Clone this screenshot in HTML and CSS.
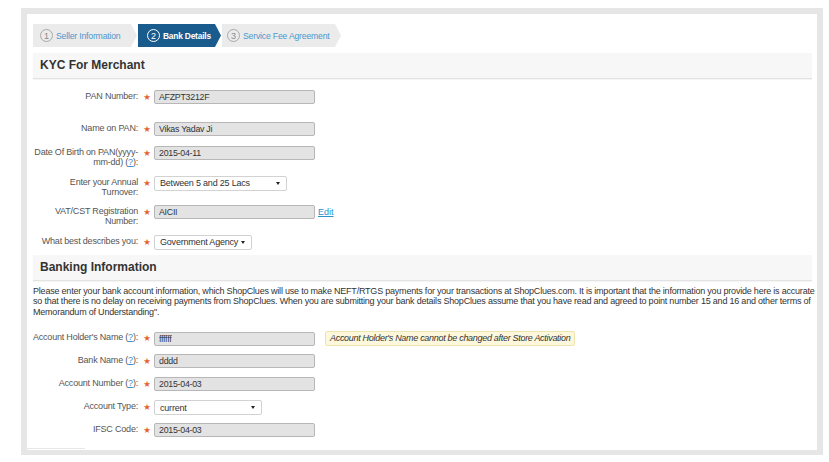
FILE: index.html
```html
<!DOCTYPE html>
<html lang="en">
<head>
<meta charset="utf-8">
<title>Bank Details</title>
<link rel="stylesheet" href="styles.css">
</head>
<body>
<div class="frame">
  <div class="panel">
    <div class="steps">
      <div class="step step-1"><span class="num">1</span><span class="step-text">Seller Information</span></div>
      <div class="step step-2 active"><span class="num">2</span><span class="step-text">Bank Details</span></div>
      <div class="step step-3"><span class="num">3</span><span class="step-text">Service Fee Agreement</span></div>
    </div>

    <h2 class="section-head">KYC For Merchant</h2>
    <div class="form kyc">
      <div class="row row-first">
        <label class="lbl"><span>PAN Number:</span></label><span class="req">★</span>
        <div class="field"><input class="txt" type="text" value="AFZPT3212F" readonly></div>
      </div>
      <div class="row">
        <label class="lbl"><span>Name on PAN:</span></label><span class="req">★</span>
        <div class="field"><input class="txt" type="text" value="Vikas Yadav Ji" readonly></div>
      </div>
      <div class="row">
        <label class="lbl"><span>Date Of Birth on PAN(yyyy-<br>mm-dd) (<a class="help" href="#">?</a>):</span></label><span class="req">★</span>
        <div class="field"><input class="txt" type="text" value="2015-04-11" readonly></div>
      </div>
      <div class="row">
        <label class="lbl"><span>Enter your Annual<br>Turnover:</span></label><span class="req">★</span>
        <div class="field"><div class="sel sel-turnover"><span>Between 5 and 25 Lacs</span><i class="caret"></i></div></div>
      </div>
      <div class="row">
        <label class="lbl"><span>VAT/CST Registration<br>Number:</span></label><span class="req">★</span>
        <div class="field"><input class="txt" type="text" value="AICII" readonly><a class="edit" href="#">Edit</a></div>
      </div>
      <div class="row">
        <label class="lbl"><span>What best describes you:</span></label><span class="req">★</span>
        <div class="field"><div class="sel sel-type"><span>Government Agency</span><i class="caret"></i></div></div>
      </div>
    </div>

    <h2 class="section-head head-bank">Banking Information</h2>
    <p class="intro">Please enter your bank account information, which ShopClues will use to make NEFT/RTGS payments for your transactions at ShopClues.com. It is important that the information you provide here is accurate<br>so that there is no delay on receiving payments from ShopClues. When you are submitting your bank details ShopClues assume that you have read and agreed to point number 15 and 16 and other terms of<br>Memorandum of Understanding".</p>

    <div class="form bank">
      <div class="row">
        <label class="lbl"><span>Account Holder's Name (<a class="help" href="#">?</a>):</span></label><span class="req">★</span>
        <div class="field"><input class="txt" type="text" value="ffffff" readonly><span class="note">Account Holder's Name cannot be changed after Store Activation</span></div>
      </div>
      <div class="row">
        <label class="lbl"><span>Bank Name (<a class="help" href="#">?</a>):</span></label><span class="req">★</span>
        <div class="field"><input class="txt" type="text" value="dddd" readonly></div>
      </div>
      <div class="row">
        <label class="lbl"><span>Account Number (<a class="help" href="#">?</a>):</span></label><span class="req">★</span>
        <div class="field"><input class="txt" type="text" value="2015-04-03" readonly></div>
      </div>
      <div class="row">
        <label class="lbl"><span>Account Type:</span></label><span class="req">★</span>
        <div class="field"><div class="sel sel-acct"><span>current</span><i class="caret"></i></div></div>
      </div>
      <div class="row">
        <label class="lbl"><span>IFSC Code:</span></label><span class="req">★</span>
        <div class="field"><input class="txt" type="text" value="2015-04-03" readonly></div>
      </div>
    </div>
    <div class="bottom-tab"></div>
  </div>
</div>
</body>
</html>
```

FILE: styles.css
```css
* { box-sizing: border-box; }

html, body {
  margin: 0;
  padding: 0;
  background: #ffffff;
}

body {
  font-family: "Liberation Sans", Arial, sans-serif;
  color: #333333;
}

.frame {
  margin: 8px 0 0 21px;
  width: 802px;
  height: 447px;
  background: #e6e6e6;
  padding: 6px 6px 5px 6px;
}

.panel {
  background: #ffffff;
  height: 100%;
  padding: 10px 5px 0 6px;
  position: relative;
  overflow: hidden;
}

/* ---------- steps ---------- */
.steps {
  display: flex;
  gap: 1px;
  height: 23px;
}

.step {
  display: flex;
  align-items: center;
  gap: 3px;
  padding-left: 7px;
  background: #ebebeb;
  color: #4d98cc;
  font-size: 8.7px;
  letter-spacing: -0.2px;
  white-space: nowrap;
  clip-path: polygon(0 0, calc(100% - 6px) 0, 100% 50%, calc(100% - 6px) 100%, 0 100%);
}

.step-1 { width: 104px; }
.step-2 { width: 83px; padding-left: 9px; }
.step-3 { width: 119px; padding-left: 5px; }

.step.active {
  background: #1a5b8d;
  color: #ffffff;
  font-weight: bold;
  font-size: 8.4px;
}

.num {
  width: 13px;
  height: 13px;
  border: 1px solid #a8a8a8;
  border-radius: 50%;
  display: flex;
  align-items: center;
  justify-content: center;
  font-size: 9px;
  letter-spacing: 0;
  font-weight: normal;
  color: #8a8a8a;
  flex: none;
}

.step.active .num {
  border-color: #ffffff;
  color: #ffffff;
}

/* ---------- section headers ---------- */
.section-head {
  margin: 6px 0 0 0;
  height: 26px;
  line-height: 25px;
  padding-left: 7px;
  background: #f7f7f7;
  border-bottom: 1px solid #e3e3e3;
  box-shadow: 0 1px 1px rgba(0, 0, 0, 0.04);
  font-size: 12px;
  font-weight: bold;
  color: #333333;
}

.section-head.head-bank { margin-top: 4px; }

/* ---------- form rows ---------- */
.form.kyc { margin-top: 11px; }

.row {
  display: grid;
  grid-template-columns: 105px 16px 1fr;
  align-items: start;
  min-height: 16px;
  margin-bottom: 8px;
}

.form.kyc .row-first { margin-bottom: 16px; }
.form.kyc .row:last-child { margin-bottom: 0; }

.form.bank { margin-top: 14px; }
.form.bank .row { margin-bottom: 7px; }

.lbl {
  display: flex;
  justify-content: flex-end;
  text-align: right;
  white-space: nowrap;
  font-size: 9px;
  letter-spacing: -0.2px;
  line-height: 10.3px;
  padding-top: 1px;
  color: #555555;
}

.help {
  color: #3d8ccc;
  text-decoration: underline;
}

.req {
  font-family: "DejaVu Sans", sans-serif;
  font-size: 8.5px;
  line-height: 10px;
  padding-top: 2px;
  color: #e8622a;
  text-align: center;
  padding-left: 2px;
}

.field {
  display: flex;
  align-items: center;
  gap: 3px;
}

.txt {
  width: 161px;
  height: 14px;
  margin: 0;
  padding: 0 4px;
  border: 1px solid #b7b7b7;
  border-radius: 2px;
  background: #e3e3e3;
  font-family: "Liberation Sans", Arial, sans-serif;
  font-size: 8.8px;
  letter-spacing: -0.25px;
  color: #333333;
  outline: none;
}

.sel {
  height: 15px;
  display: flex;
  align-items: center;
  justify-content: space-between;
  padding: 0 6px 0 5px;
  border: 1px solid #d2d2d2;
  border-radius: 2px;
  background: #ffffff;
  font-size: 9px;
  letter-spacing: -0.2px;
  color: #333333;
  white-space: nowrap;
}

.sel-turnover { width: 133px; }
.sel-type { width: 98px; }
.sel-acct { width: 108px; }

.caret {
  flex: none;
  width: 0;
  height: 0;
  border-left: 2px solid transparent;
  border-right: 2px solid transparent;
  border-top: 3px solid #222222;
}

.edit {
  font-size: 9px;
  color: #2e8fc9;
  text-decoration: underline;
}

.note {
  margin-left: 7px;
  height: 15px;
  line-height: 13px;
  padding: 0 4px;
  background: #fdf8dc;
  border: 1px solid #efe4ad;
  border-radius: 2px;
  font-size: 9px;
  letter-spacing: -0.3px;
  font-style: italic;
  color: #333333;
  white-space: nowrap;
}

/* ---------- intro ---------- */
.intro {
  margin: 5px 0 0 0;
  font-size: 9px;
  letter-spacing: -0.21px;
  line-height: 10.5px;
  color: #333333;
  white-space: nowrap;
}

.bottom-tab {
  position: absolute;
  left: 0;
  bottom: 0;
  width: 58px;
  height: 2px;
  border-top: 1px solid #e6e6e6;
}
```
